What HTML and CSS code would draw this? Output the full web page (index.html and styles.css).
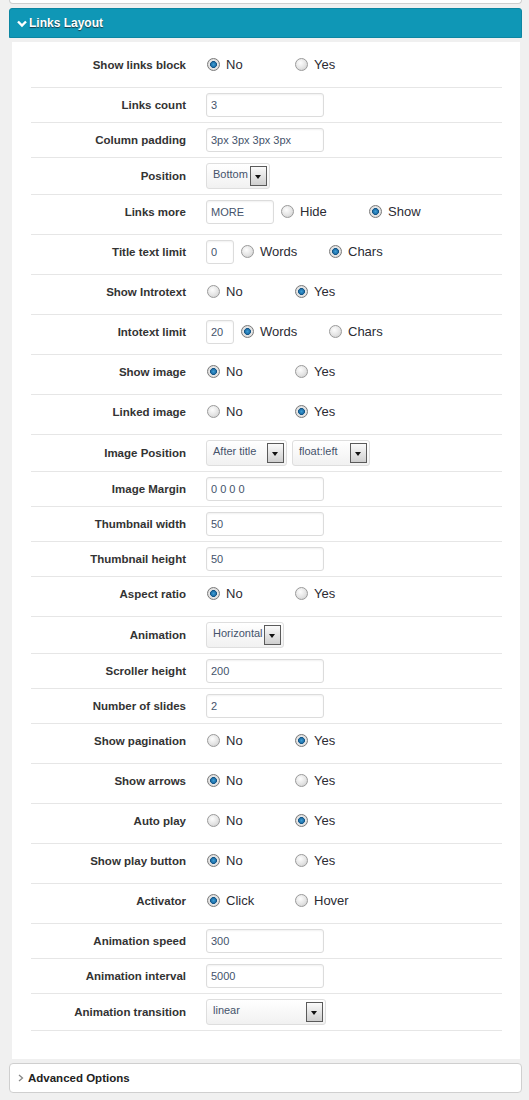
FILE: index.html
```html
<!DOCTYPE html>
<html>
<head>
<meta charset="utf-8">
<link rel="stylesheet" href="styles.css">
</head>
<body>
<div class="top-card"></div>

<div class="section-head">
  <svg class="chev" width="10" height="8" viewBox="0 0 10 8"><path d="M1 1.5 L5 5.5 L9 1.5" fill="none" stroke="#fff" stroke-width="2.4"/></svg>
  <span>Links Layout</span>
</div>

<div class="panel">
  <div class="row radio-row">
    <div class="lbl">Show links block</div>
    <span class="opt"><span class="rd on"></span>No</span>
    <span class="opt"><span class="rd"></span>Yes</span>
  </div>
  <div class="row">
    <div class="lbl">Links count</div>
    <input class="txt" type="text" value="3">
  </div>
  <div class="row">
    <div class="lbl">Column padding</div>
    <input class="txt" type="text" value="3px 3px 3px 3px">
  </div>
  <div class="row">
    <div class="lbl">Position</div>
    <div class="sel w64"><span>Bottom</span><span class="arr"></span></div>
  </div>
  <div class="row radio-row">
    <div class="lbl">Links more</div>
    <input class="txt w68" type="text" value="MORE">
    <span class="opt"><span class="rd"></span>Hide</span>
    <span class="opt"><span class="rd on"></span>Show</span>
  </div>
  <div class="row radio-row">
    <div class="lbl">Title text limit</div>
    <input class="txt w28" type="text" value="0">
    <span class="opt"><span class="rd"></span>Words</span>
    <span class="opt"><span class="rd on"></span>Chars</span>
  </div>
  <div class="row radio-row">
    <div class="lbl">Show Introtext</div>
    <span class="opt"><span class="rd"></span>No</span>
    <span class="opt"><span class="rd on"></span>Yes</span>
  </div>
  <div class="row radio-row">
    <div class="lbl">Intotext limit</div>
    <input class="txt w28" type="text" value="20">
    <span class="opt"><span class="rd on"></span>Words</span>
    <span class="opt"><span class="rd"></span>Chars</span>
  </div>
  <div class="row radio-row">
    <div class="lbl">Show image</div>
    <span class="opt"><span class="rd on"></span>No</span>
    <span class="opt"><span class="rd"></span>Yes</span>
  </div>
  <div class="row radio-row">
    <div class="lbl">Linked image</div>
    <span class="opt"><span class="rd"></span>No</span>
    <span class="opt"><span class="rd on"></span>Yes</span>
  </div>
  <div class="row">
    <div class="lbl">Image Position</div>
    <div class="sel w81"><span>After title</span><span class="arr"></span></div>
    <div class="sel w78 ml5"><span>float:left</span><span class="arr"></span></div>
  </div>
  <div class="row">
    <div class="lbl">Image Margin</div>
    <input class="txt" type="text" value="0 0 0 0">
  </div>
  <div class="row">
    <div class="lbl">Thumbnail width</div>
    <input class="txt" type="text" value="50">
  </div>
  <div class="row">
    <div class="lbl">Thumbnail height</div>
    <input class="txt" type="text" value="50">
  </div>
  <div class="row radio-row">
    <div class="lbl">Aspect ratio</div>
    <span class="opt"><span class="rd on"></span>No</span>
    <span class="opt"><span class="rd"></span>Yes</span>
  </div>
  <div class="row">
    <div class="lbl">Animation</div>
    <div class="sel w78"><span>Horizontal</span><span class="arr"></span></div>
  </div>
  <div class="row">
    <div class="lbl">Scroller height</div>
    <input class="txt" type="text" value="200">
  </div>
  <div class="row">
    <div class="lbl">Number of slides</div>
    <input class="txt" type="text" value="2">
  </div>
  <div class="row radio-row">
    <div class="lbl">Show pagination</div>
    <span class="opt"><span class="rd"></span>No</span>
    <span class="opt"><span class="rd on"></span>Yes</span>
  </div>
  <div class="row radio-row">
    <div class="lbl">Show arrows</div>
    <span class="opt"><span class="rd on"></span>No</span>
    <span class="opt"><span class="rd"></span>Yes</span>
  </div>
  <div class="row radio-row">
    <div class="lbl">Auto play</div>
    <span class="opt"><span class="rd"></span>No</span>
    <span class="opt"><span class="rd on"></span>Yes</span>
  </div>
  <div class="row radio-row">
    <div class="lbl">Show play button</div>
    <span class="opt"><span class="rd on"></span>No</span>
    <span class="opt"><span class="rd"></span>Yes</span>
  </div>
  <div class="row radio-row">
    <div class="lbl">Activator</div>
    <span class="opt"><span class="rd on"></span>Click</span>
    <span class="opt"><span class="rd"></span>Hover</span>
  </div>
  <div class="row">
    <div class="lbl">Animation speed</div>
    <input class="txt" type="text" value="300">
  </div>
  <div class="row">
    <div class="lbl">Animation interval</div>
    <input class="txt" type="text" value="5000">
  </div>
  <div class="row">
    <div class="lbl">Animation transition</div>
    <div class="sel w120"><span>linear</span><span class="arr"></span></div>
  </div>
</div>

<div class="adv">
  <svg class="chev-r" width="6" height="8" viewBox="0 0 6 8"><path d="M1 1 L4.5 4 L1 7" fill="none" stroke="#888" stroke-width="1.3"/></svg>
  <span>Advanced Options</span>
</div>
</body>
</html>
```

FILE: styles.css
```css
html, body {
  margin: 0;
  padding: 0;
}
body {
  background: #f0f0f0;
  font-family: "Liberation Sans", Arial, sans-serif;
  color: #333;
  width: 529px;
}
.top-card {
  margin: 0 7px 0 9px;
  height: 3px;
  background: #fff;
  border: 1px solid #cfcfcf;
  border-top: none;
  border-radius: 0 0 4px 4px;
}
.section-head {
  margin: 4px 7px 0 9px;
  height: 28px;
  background: #0f97b6;
  border: 1px solid #0c86a2;
  border-radius: 3px 3px 0 0;
  display: flex;
  align-items: center;
  color: #fff;
  font-weight: bold;
  font-size: 12px;
  text-shadow: 0 1px 1px #1c3a44;
  padding-left: 7px;
}
.chev {
  margin-right: 2px;
  margin-top: 1px;
}
.panel {
  margin: 4px 9px 0 12px;
  background: #fff;
  padding: 6px 18px 28px 19px;
}
.row {
  display: flex;
  align-items: center;
  padding: 5px 0;
  border-bottom: 1px solid #e6e6e6;
}
.radio-row {
  min-height: 29px;
  padding: 2px 0 8px;
}
.lbl {
  width: 155px;
  margin-right: 20px;
  text-align: right;
  font-weight: bold;
  font-size: 11.5px;
  color: #333;
}
.opt {
  width: 88px;
  display: flex;
  align-items: center;
  font-size: 13px;
  color: #2b2b33;
  height: 29px;
}
.rd {
  width: 11px;
  height: 11px;
  border-radius: 50%;
  border: 1px solid #9a9a9a;
  background: radial-gradient(circle at 40% 35%, #fdfdfd 0%, #e4e4e4 55%, #c8c8c8 100%);
  margin: 0 6px 0 1px;
  flex: none;
  position: relative;
}
.rd.on {
  border-color: #7a7a7a;
  background: radial-gradient(circle at 50% 50%, #3d9fd6 0%, #1f6fa8 32%, #0d4f80 40%, #e8e8e8 48%, #cfcfcf 100%);
}
.txt {
  box-sizing: border-box;
  width: 118px;
  height: 24px;
  border: 1px solid #dcdcdc;
  border-radius: 3px;
  box-shadow: inset 0 1px 2px rgba(0,0,0,0.06);
  padding: 0 4px;
  font-family: "Liberation Sans", Arial, sans-serif;
  font-size: 11px;
  color: #45536b;
  background: #fff;
  margin: 0;
  outline: none;
}
.w68 { width: 68px; margin-right: 6px; }
.w28 { width: 28px; margin-right: 6px; }
.sel {
  box-sizing: border-box;
  height: 26px;
  border: 1px solid #dedede;
  border-radius: 3px;
  background: linear-gradient(#ffffff, #f1f1f1);
  display: flex;
  align-items: center;
  justify-content: space-between;
  padding: 0 2px 0 6px;
  font-size: 11px;
  color: #45536b;
}
.sel span:first-child {
  margin-top: -4px;
}
.arr {
  box-sizing: border-box;
  width: 17px;
  height: 20px;
  border: 1px solid #5a5a5a;
  background: linear-gradient(#fafafa, #cfcfcf);
  position: relative;
  flex: none;
}
.arr::after {
  content: "";
  position: absolute;
  left: 4px;
  top: 8px;
  border-left: 3.5px solid transparent;
  border-right: 3.5px solid transparent;
  border-top: 4px solid #111;
}
.w64 { width: 64px; }
.w81 { width: 81px; }
.w78 { width: 78px; }
.w120 { width: 120px; }
.ml5 { margin-left: 5px; }
.adv {
  margin: 4px 7px 0 9px;
  height: 28px;
  background: #fff;
  border: 1px solid #cfcfcf;
  border-radius: 4px;
  display: flex;
  align-items: center;
  padding-left: 8px;
  font-weight: bold;
  font-size: 11.5px;
  color: #222;
}
.chev-r {
  margin-right: 4px;
}
```
